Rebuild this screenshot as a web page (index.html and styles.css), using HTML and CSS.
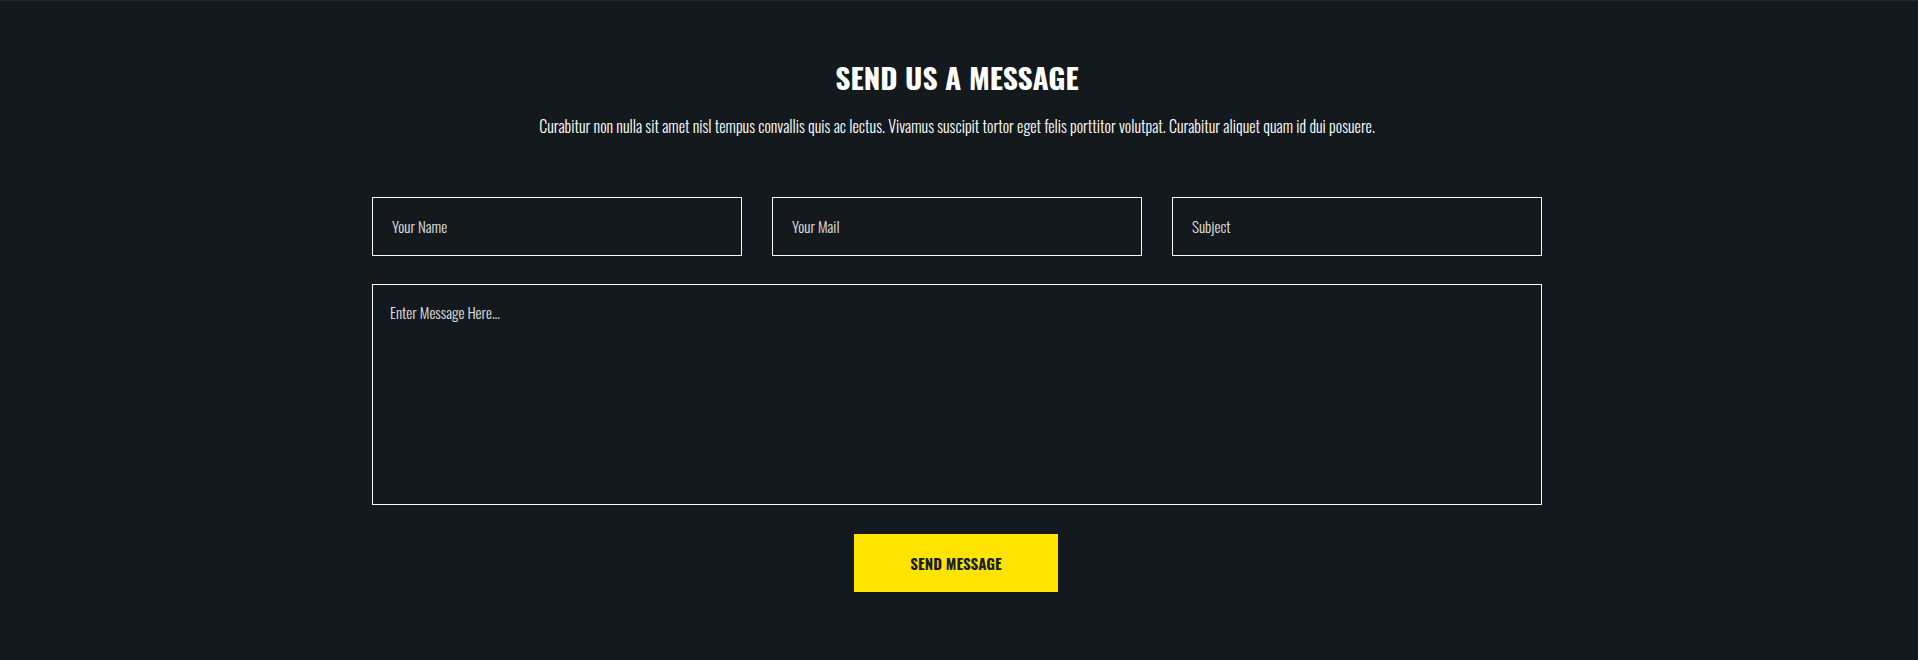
FILE: index.html
```html
<!DOCTYPE html>
<html lang="en">
<head>
<meta charset="utf-8">
<title>Contact</title>
<link rel="stylesheet" href="styles.css">
</head>
<body>
<section class="contact">
  <div class="container">
    <h2 class="title">SEND US A MESSAGE</h2>
    <p class="lead">Curabitur non nulla sit amet nisl tempus convallis quis ac lectus. Vivamus suscipit tortor eget felis porttitor volutpat. Curabitur aliquet quam id dui posuere.</p>
    <form class="form">
      <div class="row">
        <input class="field" type="text" placeholder="Your Name">
        <input class="field" type="text" placeholder="Your Mail">
        <input class="field" type="text" placeholder="Subject">
      </div>
      <textarea class="message" placeholder="Enter Message Here..."></textarea>
      <div class="actions">
        <button class="send" type="button">SEND MESSAGE</button>
      </div>
    </form>
  </div>
</section>
</body>
</html>
```

FILE: styles.css
```css
html, body {
  margin: 0;
  padding: 0;
  height: 100%;
  background: #13191c;
}
body {
  font-family: "Oswald", "Liberation Sans Narrow", "DejaVu Sans Condensed", "Liberation Sans", sans-serif;
  color: #ffffff;
}
.contact {
  border-top: 1px solid #232a2e;
  min-height: 659px;
  box-sizing: border-box;
  padding-top: 56px;
}
.container {
  width: 1170px;
  margin-left: calc(50% - 587px);
}
.title {
  margin: 0;
  text-align: center;
  font-size: 29.5px;
  line-height: 40px;
  font-weight: 700;
  color: #ffffff;
}
.lead {
  margin: 19px 0 0;
  text-align: center;
  font-size: 16px;
  font-weight: 300;
  line-height: 20px;
  color: #ffffff;
}
.form {
  margin-top: 61px;
  display: flex;
  flex-direction: column;
}
.row {
  display: grid;
  grid-template-columns: repeat(3, 1fr);
  column-gap: 30px;
}
.field, .message {
  box-sizing: border-box;
  background: transparent;
  border: 1px solid #ffffff;
  border-radius: 0;
  color: #ffffff;
  font-family: inherit;
  font-size: 15px;
  font-weight: 300;
  outline: none;
  margin: 0;
}
.field {
  height: 59px;
  padding: 0 19px 2px;
}
.field::placeholder, .message::placeholder {
  color: #e2e2e2;
  opacity: 1;
}
.message {
  margin-top: 28px;
  height: 221px;
  padding: 16px 17px;
  resize: none;
  display: block;
  width: 100%;
}
.actions {
  display: flex;
  justify-content: center;
  margin-top: 29px;
}
.send {
  width: 204px;
  height: 58px;
  border: 0;
  border-radius: 0;
  background: #ffe400;
  color: #1a1d26;
  font-family: inherit;
  font-weight: 700;
  font-size: 15px;
  cursor: pointer;
  margin-left: -2px;
}
```
